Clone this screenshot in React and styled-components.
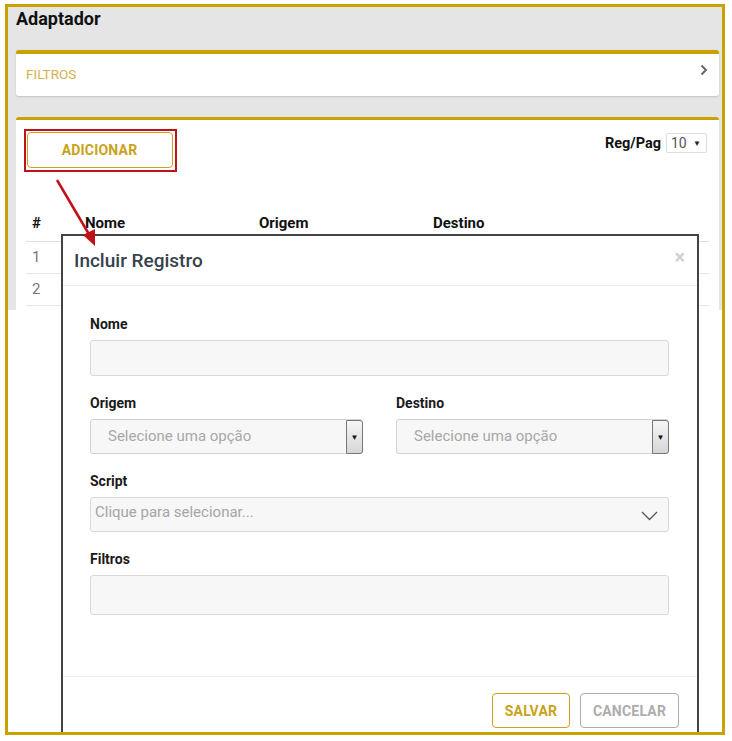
import styled, { createGlobalStyle } from "styled-components";

const GlobalStyle = createGlobalStyle`
  html, body { margin: 0; padding: 0; background: #ffffff; }
  body { font-family: Roboto, "Liberation Sans", Arial, sans-serif; }
  * { box-sizing: border-box; }
`;

const Frame = styled.div`
  position: relative;
  margin: 4px 0 0 5px;
  width: 720px;
  height: 731px;
  border: 3px solid #c9a100;
  background: #ffffff;
  overflow: hidden;
`;

const Page = styled.div`
  background: #e5e5e5;
  height: 303px;
  padding: 0 3px 0 8px;
  display: flex;
  flex-direction: column;
`;

const Title = styled.h1`
  margin: 0;
  font-size: 18px;
  line-height: 24px;
  font-weight: 700;
  color: #111;
`;

const FilterCard = styled.div`
  margin-top: 19px;
  height: 46px;
  background: #fff;
  border-top: 4px solid #c9a100;
  border-radius: 3px;
  box-shadow: 0 1px 2px rgba(0, 0, 0, 0.15);
  display: flex;
  align-items: center;
  justify-content: space-between;
  padding: 0 11px 2px 10px;
  font-size: 13.5px;
  color: #d3b24a;
  svg { margin-top: -8px; }
`;

const MainCard = styled.div`
  margin-top: 21px;
  flex: 1;
  background: #fff;
  border-top: 3px solid #c9a100;
  border-radius: 3px 3px 0 0;
  padding: 9px 10px 0 10px;
`;

const Toolbar = styled.div`
  display: flex;
  justify-content: space-between;
  align-items: flex-start;
`;

const Highlight = styled.div`
  margin-left: -2px;
  border: 2.5px solid #c0101a;
  padding: 1px 2px 2px 0.5px;
`;

const OutlineButton = styled.button`
  font-family: Roboto, "Liberation Sans", Arial, sans-serif;
  width: ${({ $w }) => $w}px;
  height: ${({ $h }) => $h}px;
  background: #fff;
  border: 1.5px solid ${({ $color }) => $color};
  border-radius: 4px;
  color: ${({ $color }) => $color};
  font-size: ${({ $size }) => $size}px;
  font-weight: 700;
  letter-spacing: 0.2px;
  padding: 0;
`;

const PerPage = styled.div`
  display: flex;
  align-items: center;
  gap: 5px;
  margin-top: 4px;
  margin-right: 2px;
  font-size: 14.5px;
  font-weight: 700;
  color: #111;
`;

const SmallSelect = styled.div`
  width: 41px;
  height: 20px;
  border: 1px solid #ddd;
  border-radius: 2px;
  display: flex;
  align-items: center;
  justify-content: space-between;
  padding: 0 5px 0 4px;
  font-size: 14px;
  font-weight: 400;
  color: #555;
  span { font-size: 8px; color: #222; }
`;

const Table = styled.table`
  margin-top: 33px;
  width: 100%;
  border-collapse: collapse;
  th {
    height: 36px;
    text-align: left;
    font-size: 15px;
    font-weight: 700;
    color: #111;
    padding: 0 0 0 6px;
    border-bottom: 1px solid #ddd;
    vertical-align: middle;
  }
  td {
    height: 32px;
    font-size: 15px;
    color: #777;
    padding: 0 0 0 6px;
    border-bottom: 1px solid #e6e6e6;
  }
`;

const Arrow = styled.svg`
  position: absolute;
  left: 40px;
  top: 170px;
  pointer-events: none;
`;

const Modal = styled.div`
  position: absolute;
  left: 53px;
  top: 227px;
  width: 638px;
  height: 540px;
  border: 2px solid #444;
  background: #fff;
  display: flex;
  flex-direction: column;
`;

const ModalHeader = styled.div`
  height: 50px;
  border-bottom: 1px solid #eeeeee;
  display: flex;
  align-items: center;
  justify-content: space-between;
  padding: 0 12px 0 11px;
  h2 {
    margin: 0;
    font-size: 19px;
    font-weight: 500;
    color: #37424a;
  }
`;

const Close = styled.span`
  font-size: 20px;
  font-weight: 700;
  color: #cfcfcf;
  margin-top: -8px;
`;

const ModalBody = styled.div`
  padding: 30px 28px 0 27px;
  height: 391px;
  border-bottom: 1px solid #f0f0f0;
`;

const Row = styled.div`
  display: grid;
  grid-template-columns: 1fr 1fr;
  column-gap: 33px;
`;

const Field = styled.div`
  margin-top: ${({ $first }) => ($first ? 0 : 19)}px;
`;

const Label = styled.div`
  font-size: 14px;
  line-height: 16px;
  font-weight: 700;
  color: #1a1a1a;
  margin-bottom: 8px;
`;

const Input = styled.div`
  height: ${({ $h }) => $h}px;
  background: #f7f7f7;
  border: 1px solid #d9d9d9;
  border-radius: 3px;
  display: flex;
  align-items: center;
  justify-content: space-between;
  padding: 0 10px 0 4px;
  font-size: 15px;
  color: #a5a5a5;
  span { margin-top: -6px; }
  svg { margin-top: 2px; }
`;

const Select = styled.div`
  height: 35px;
  background: #f7f7f7;
  border: 1px solid #d3d3d3;
  border-radius: 3px;
  display: flex;
  align-items: stretch;
  justify-content: space-between;
  padding-left: 17px;
  font-size: 15px;
  color: #a8a8a8;
  span { align-self: center; margin-top: -1px; }
`;

const SelectButton = styled.div`
  width: 17px;
  margin: 0 -1px -1px 0;
  border: 1px solid #777;
  border-radius: 0 3px 3px 0;
  background: linear-gradient(#f6f6f6, #d6d6d6);
  display: flex;
  align-items: center;
  justify-content: center;
  font-size: 8px;
  color: #111;
`;

const ModalFooter = styled.div`
  display: flex;
  justify-content: flex-end;
  gap: 10px;
  padding: 16px 18px 0 0;
`;

const rows = [1, 2];

export default function App() {
  return (
    <>
      <GlobalStyle />
      <Frame>
        <Page>
          <Title>Adaptador</Title>
          <FilterCard>
            <span>FILTROS</span>
            <svg width="8" height="12" viewBox="0 0 8 12">
              <polyline points="1.5,1.5 6,6 1.5,10.5" fill="none" stroke="#666" strokeWidth="2" />
            </svg>
          </FilterCard>
          <MainCard>
            <Toolbar>
              <Highlight>
                <OutlineButton $w={146} $h={36} $size={14} $color="#c9a21a">
                  ADICIONAR
                </OutlineButton>
              </Highlight>
              <PerPage>
                Reg/Pag
                <SmallSelect>
                  10<span>&#9660;</span>
                </SmallSelect>
              </PerPage>
            </Toolbar>
            <Table>
              <thead>
                <tr>
                  <th style={{ width: 53 }}>#</th>
                  <th style={{ width: 174 }}>Nome</th>
                  <th style={{ width: 174 }}>Origem</th>
                  <th>Destino</th>
                </tr>
              </thead>
              <tbody>
                {rows.map((r) => (
                  <tr key={r}>
                    <td>{r}</td>
                    <td />
                    <td />
                    <td />
                  </tr>
                ))}
              </tbody>
            </Table>
          </MainCard>
        </Page>

        <Modal>
          <ModalHeader>
            <h2>Incluir Registro</h2>
            <Close>&times;</Close>
          </ModalHeader>
          <ModalBody>
            <Field $first>
              <Label>Nome</Label>
              <Input $h={36} />
            </Field>
            <Row>
              <Field>
                <Label>Origem</Label>
                <Select>
                  <span>Selecione uma opção</span>
                  <SelectButton>&#9660;</SelectButton>
                </Select>
              </Field>
              <Field>
                <Label>Destino</Label>
                <Select>
                  <span>Selecione uma opção</span>
                  <SelectButton>&#9660;</SelectButton>
                </Select>
              </Field>
            </Row>
            <Field>
              <Label>Script</Label>
              <Input $h={35}>
                <span>Clique para selecionar...</span>
                <svg width="17" height="10" viewBox="0 0 17 10">
                  <polyline points="1,1 8.5,8.5 16,1" fill="none" stroke="#555" strokeWidth="1.3" />
                </svg>
              </Input>
            </Field>
            <Field>
              <Label>Filtros</Label>
              <Input $h={40} />
            </Field>
          </ModalBody>
          <ModalFooter>
            <OutlineButton $w={78} $h={35} $size={14} $color="#c9a21a">
              SALVAR
            </OutlineButton>
            <OutlineButton $w={99} $h={35} $size={14} $color="#adadad">
              CANCELAR
            </OutlineButton>
          </ModalFooter>
        </Modal>

        <Arrow width="70" height="85" viewBox="0 0 70 85">
          <line x1="9" y1="3" x2="42" y2="59" stroke="#c0101a" strokeWidth="2.5" />
          <polygon points="47,69 35,58 47,52" fill="#c0101a" />
        </Arrow>
      </Frame>
    </>
  );
}
